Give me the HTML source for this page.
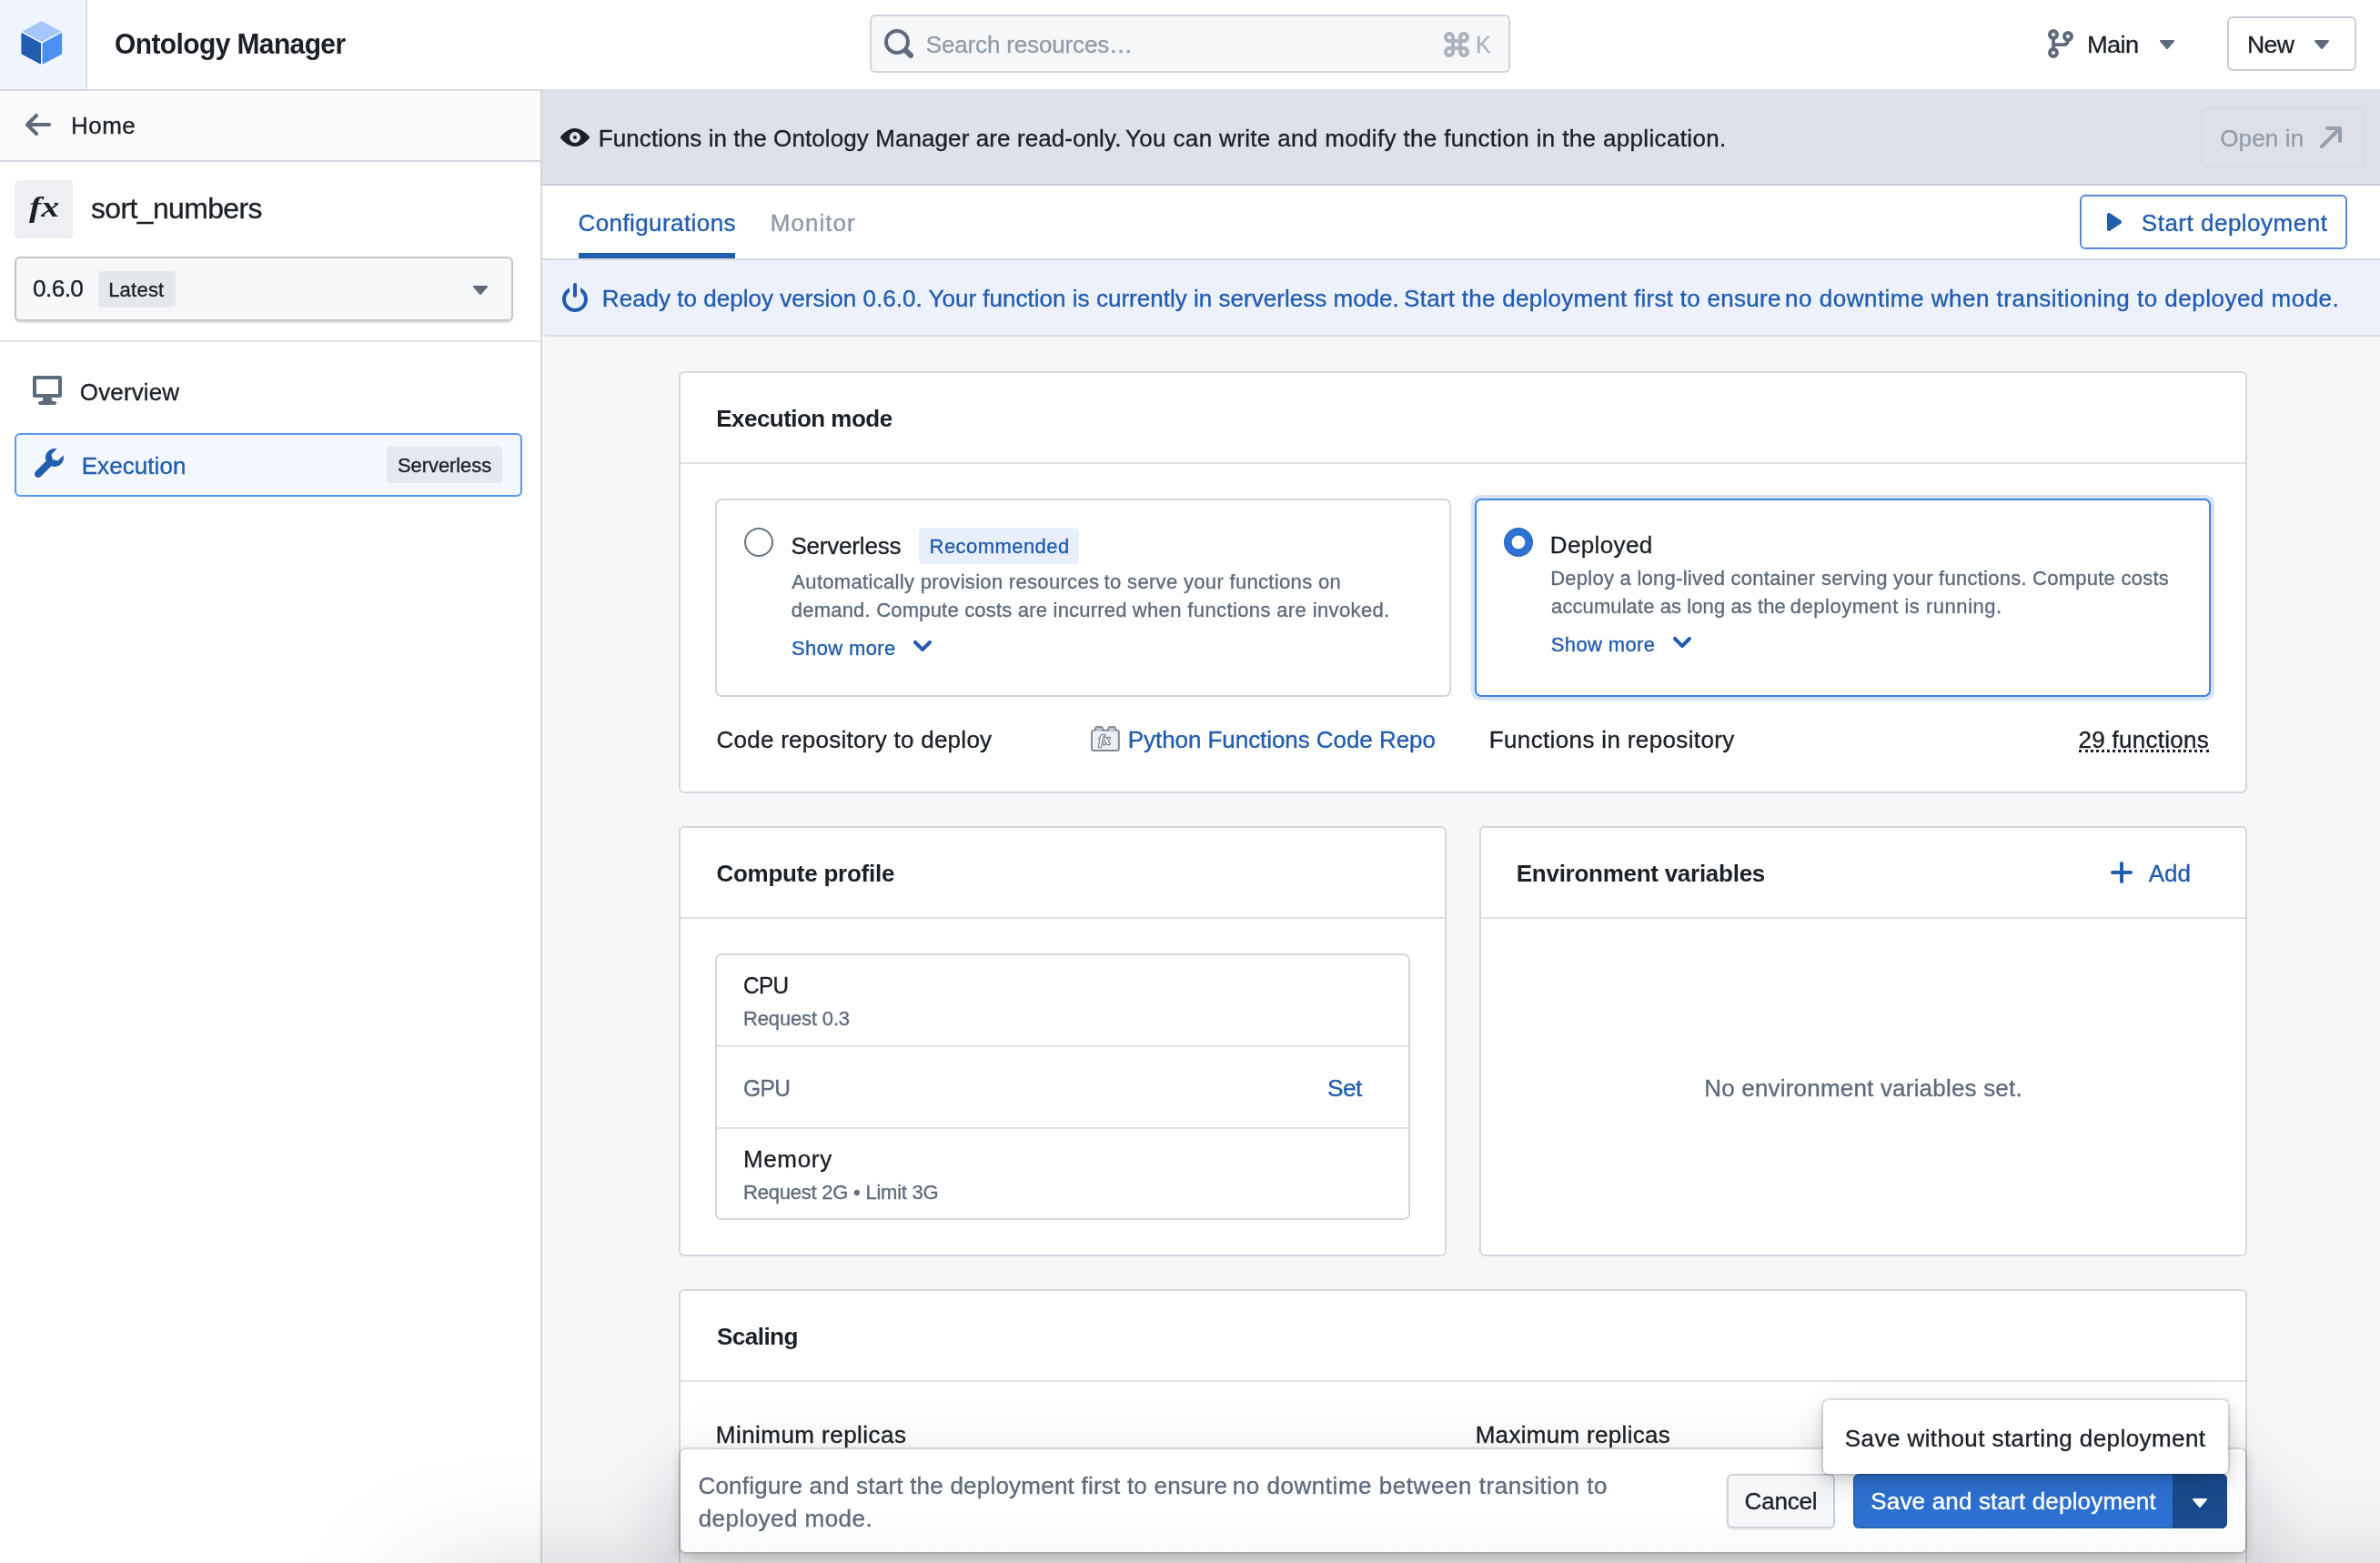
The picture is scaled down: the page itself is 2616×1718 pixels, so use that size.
<!DOCTYPE html>
<html lang="en"><head><meta charset="utf-8"><title>Ontology Manager</title>
<style>
html,body{margin:0;padding:0;background:#fff;}
body{width:2616px;height:1718px;overflow:hidden;font-family:"Liberation Sans",sans-serif;}
#root{will-change:transform;position:relative;width:2616px;height:1718px;overflow:hidden;background:#fff;}
#root *{box-sizing:border-box;}
.a{position:absolute;}
.t{position:absolute;white-space:nowrap;line-height:1;font-family:"Liberation Sans",sans-serif;-webkit-text-stroke:0.35px currentColor;}
svg{position:absolute;display:block;overflow:visible;}
.card{position:absolute;background:#fff;border:2px solid #d3d8de;border-radius:6px;}
.hr{position:absolute;height:2px;background:#dfe2e6;}

</style></head>
<body>
<div id="root">
<!-- ===== header ===== -->
<div class="a" style="left:0;top:0;width:2616px;height:100px;background:#fff;border-bottom:2px solid #d5d9e1;"></div>
<div class="a" style="left:0;top:0;width:96px;height:98px;background:#f0f4fe;border-right:2px solid #c8dafa;"></div>
<!-- cube logo -->
<svg style="left:23px;top:23px" width="46" height="48" viewBox="0 0 46 48">
  <polygon points="22.7,0.9 42.9,11.5 22.7,22.1 2.7,11.5" fill="#a4c6fb" stroke="#a4c6fb" stroke-width="1.2" stroke-linejoin="round"/>
  <polygon points="1,13.9 21.4,24.9 21.4,46.8 1,35.9" fill="#215db0" stroke="#215db0" stroke-width="1.2" stroke-linejoin="round"/>
  <polygon points="44.6,13.9 24.2,24.9 24.2,46.8 44.6,35.9" fill="#4c8ff0" stroke="#4c8ff0" stroke-width="1.2" stroke-linejoin="round"/>
</svg>
<!-- search box -->
<div class="a" style="left:956px;top:16px;width:704px;height:64px;background:#f6f7f9;border:2px solid #d0d5dc;border-radius:6px;"></div>
<svg style="left:972px;top:32px" width="32" height="32" viewBox="0 0 16 16"><path fill="#5f6b7c" d="M15.55 13.43l-2.67-2.68a6.94 6.94 0 001.11-3.76c0-3.87-3.13-7-7-7s-7 3.13-7 7 3.13 7 7 7c1.39 0 2.68-.42 3.76-1.11l2.68 2.67a1.498 1.498 0 102.12-2.12zm-8.56-1.44c-2.76 0-5-2.24-5-5s2.24-5 5-5 5 2.24 5 5-2.24 5-5 5z"/></svg>
<svg style="left:1585px;top:33px" width="32" height="32" viewBox="0 0 16 16"><path fill="#abb3bf" d="M12 9h-1V7h1c1.660 0 3-1.340 3-3s-1.340-3-3-3-3 1.340-3 3v1H7V4c0-1.660-1.340-3-3-3S1 2.340 1 4s1.340 3 3 3h1v2H4c-1.660 0-3 1.340-3 3s1.340 3 3 3 3-1.340 3-3v-1h2v1c0 1.660 1.340 3 3 3s3-1.340 3-3-1.340-3-3-3zm-1-5c0-.55.45-1 1-1s1 .45 1 1-.45 1-1 1h-1V4zM5 12c0 .55-.45 1-1 1s-1-.45-1-1 .45-1 1-1h1v1zm0-7H4c-.55 0-1-.45-1-1s.45-1 1-1 1 .45 1 1v1zm4 4H7V7h2v2zm3 4c-.55 0-1-.45-1-1v-1h1c.55 0 1 .45 1 1s-.45 1-1 1z"/></svg>
<!-- branch -->
<svg style="left:2249px;top:32px" width="32" height="32" viewBox="0 0 16 16" fill="none" stroke="#5f6b7c" stroke-width="2">
  <circle cx="4" cy="3" r="2"/><circle cx="12" cy="4" r="2"/><circle cx="4" cy="13" r="2"/>
  <path d="M4 5V11" stroke-width="1.9"/><path d="M4 8.6H9.4C11.4 8.6 12 7.6 12 6" stroke-width="1.9"/>
</svg>
<svg style="left:2366px;top:32px" width="32" height="32" viewBox="0 0 16 16"><path fill="#5f6b7c" d="M12 6.500c0-.28-.22-.5-.5-.5h-7a.495.495 0 00-.37.830l3.500 4c.09.1.22.170.370.170s.28-.07.370-.170l3.500-4c.08-.09.13-.2.13-.33z"/></svg>
<div class="a" style="left:2448px;top:18px;width:142px;height:60px;background:#fff;border:2px solid #c9ced6;border-radius:6px;"></div>
<svg style="left:2536px;top:32px" width="32" height="32" viewBox="0 0 16 16"><path fill="#5f6b7c" d="M12 6.500c0-.28-.22-.5-.5-.5h-7a.495.495 0 00-.37.830l3.500 4c.09.1.22.170.370.170s.28-.07.370-.170l3.500-4c.08-.09.13-.2.13-.33z"/></svg>

<!-- ===== sidebar ===== -->
<div class="a" style="left:0;top:100px;width:596px;height:1618px;background:#fff;border-right:2px solid #d3d8de;"></div>
<div class="a" style="left:0;top:100px;width:594px;height:78px;background:#fafafa;border-bottom:2px solid #d3d8e0;"></div>
<svg style="left:26px;top:121px" width="32" height="32" viewBox="0 0 16 16"><path fill="#5f6b7c" d="M13.990 6.990H4.410L7.700 3.700a1.003 1.003 0 00-1.420-1.420l-5 5a1.014 1.014 0 000 1.420l5 5a1.003 1.003 0 001.420-1.420L4.410 8.990H14c.55 0 1-.45 1-1s-.46-1-1.010-1z"/></svg>
<div class="a" style="left:16px;top:198px;width:64px;height:64px;background:#edeff2;border-radius:5px;"></div>
<div class="a" style="left:16px;top:282px;width:548px;height:71px;background:#f6f7f9;border:2px solid #c3c6cb;border-radius:6px;box-shadow:0 2px 2px rgba(17,20,24,0.14);"></div>
<div class="a" style="left:108px;top:298px;width:85px;height:40px;background:#e5e8eb;border-radius:4px;"></div>
<svg style="left:512px;top:302px" width="32" height="32" viewBox="0 0 16 16"><path fill="#5f6b7c" d="M12 6.500c0-.28-.22-.5-.5-.5h-7a.495.495 0 00-.37.830l3.500 4c.09.1.22.170.370.170s.28-.07.370-.170l3.500-4c.08-.09.13-.2.13-.33z"/></svg>
<div class="a" style="left:0;top:374px;width:594px;height:2px;background:#e1e4e8;"></div>
<svg style="left:36px;top:413px" width="32" height="32" viewBox="0 0 16 16"><path fill="#5f6b7c" d="M15 0H1C.45 0 0 .45 0 1v10c0 .55.45 1 1 1h4.750l-.5 2H4c-.55 0-1 .45-1 1s.45 1 1 1h8c.55 0 1-.45 1-1s-.45-1-1-1h-1.250l-.5-2H15c.55 0 1-.45 1-1V1c0-.55-.45-1-1-1zm-1 10H2V2h12v8z"/></svg>
<div class="a" style="left:16px;top:476px;width:558px;height:70px;background:#f3f7fe;border:2px solid #5a98f1;border-radius:6px;"></div>
<svg style="left:38px;top:493px" width="32" height="32" viewBox="0 0 16 16"><path fill="#215db0" d="M15.830 3.700l-3.060 3.050-2.840-.7-.7-2.830L12.290.170a5.004 5.004 0 00-4.830 1.290 4.967 4.967 0 00-1.120 5.360L.580 12.580c-.36.360-.580.860-.580 1.410 0 1.100.9 2 2 2 .55 0 1.050-.22 1.410-.59l5.770-5.770c1.790.69 3.910.33 5.350-1.120 1.320-1.300 1.740-3.150 1.300-4.810z"/></svg>
<div class="a" style="left:425px;top:491px;width:127px;height:40px;background:#e4e9f1;border-radius:4px;"></div>

<!-- ===== main area ===== -->
<div class="a" style="left:596px;top:100px;width:2020px;height:1618px;background:#f6f7f9;"></div>
<!-- read-only banner -->
<div class="a" style="left:596px;top:98px;width:2020px;height:106px;background:#dee1e9;border-bottom:2px solid #c5cad3;"></div>
<svg style="left:616px;top:135px" width="32" height="32" viewBox="0 0 16 16"><path fill="#1c2127" d="M8.002 7.003a1.003 1.003 0 000 2.005 1.003 1.003 0 000-2.005zm7.988.972v-.02-.01-.02-.02a.675.675 0 00-.17-.36c-.509-.673-1.118-1.264-1.737-1.806-1.328-1.173-2.846-2.155-4.523-2.546a6.702 6.702 0 00-2.925-.06c-.889.18-1.738.541-2.546.992C2.840 4.837 1.692 5.810.694 6.902c-.18.211-.36.411-.53.632-.219.29-.219.641 0 .932.51.672 1.119 1.264 1.738 1.805 1.328 1.173 2.846 2.156 4.523 2.547.968.23 1.947.24 2.925.06.889-.18 1.738-.542 2.546-.993 1.248-.712 2.397-1.684 3.395-2.777.18-.211.36-.411.53-.632.1-.13.15-.23.17-.36v-.02-.02-.01-.02-.07zm-7.988 3.038c-1.657 0-2.995-1.343-2.995-3.008 0-1.664 1.338-3.007 2.995-3.007s2.996 1.343 2.996 3.007c0 1.665-1.339 3.008-2.996 3.008z"/></svg>
<div class="a" style="left:2419px;top:118px;width:181px;height:66px;background:#dde0e8;border:2px solid #d6d9e1;border-radius:6px;"></div>
<svg style="left:2546px;top:135px" width="32" height="32" viewBox="0 0 16 16"><path fill="#959daa" d="M13 2H6c-.55 0-1 .45-1 1s.45 1 1 1h4.590L2.300 12.290c-.19.18-.3.43-.3.710a1.003 1.003 0 001.710.710L12 5.410V10c0 .55.45 1 1 1s1-.45 1-1V3c0-.55-.45-1-1-1z"/></svg>
<!-- tabs row -->
<div class="a" style="left:596px;top:204px;width:2020px;height:82px;background:#fff;border-bottom:2px solid #d5d8dd;"></div>
<div class="a" style="left:636px;top:278px;width:172px;height:6px;background:#215db0;"></div>
<div class="a" style="left:2286px;top:214px;width:294px;height:60px;background:#fff;border:2px solid #5b88d6;border-radius:6px;"></div>
<svg style="left:2308px;top:228px" width="32" height="32" viewBox="0 0 16 16"><path fill="#215db0" d="M12 8c0-.35-.19-.64-.46-.82l.01-.02-6-4-.01.02A.969.969 0 005 3c-.55 0-1 .45-1 1v8c0 .55.45 1 1 1 .21 0 .39-.08.54-.18l.01.02 6-4-.01-.02c.27-.18.46-.47.46-.82z"/></svg>
<!-- info banner -->
<div class="a" style="left:596px;top:286px;width:2030px;height:84px;background:#edf1fc;border-bottom:2px solid #d9dde6;border-radius:6px 0 0 6px;"></div>
<svg style="left:616px;top:311px" width="32" height="32" viewBox="0 0 16 16"><path fill="#215db0" d="M8 8c.55 0 1-.45 1-1V1c0-.55-.45-1-1-1S7 .45 7 1v6c0 .55.45 1 1 1zm3-5.320v2.340c1.210.910 2 2.350 2 3.980 0 2.760-2.240 5-5 5s-5-2.240-5-5c0-1.630.79-3.060 2-3.980V2.680C2.640 3.810 1 6.210 1 9c0 3.870 3.130 7 7 7s7-3.130 7-7c0-2.790-1.640-5.190-4-6.320z"/></svg>

<!-- ===== Execution mode card ===== -->
<div class="card" style="left:746px;top:408px;width:1724px;height:464px;"></div>
<div class="hr" style="left:748px;top:508px;width:1720px;"></div>
<div class="a" style="left:786px;top:548px;width:809px;height:218px;background:#fff;border:2px solid #d3d6db;border-radius:7px;"></div>
<div class="a" style="left:818px;top:580px;width:32px;height:32px;border-radius:50%;background:#fff;border:2px solid #66727f;"></div>
<div class="a" style="left:1010px;top:580px;width:176px;height:40px;background:#e9eefb;border-radius:5px;"></div>
<svg style="left:998px;top:694px" width="32" height="32" viewBox="0 0 16 16"><path fill="#215db0" d="M12 5c-.28 0-.53.110-.71.290L8 8.590l-3.290-3.300a1.003 1.003 0 00-1.420 1.420l4 4c.18.18.43.290.71.290s.53-.11.71-.29l4-4A1.003 1.003 0 0012 5z"/></svg>
<div class="a" style="left:1617px;top:544px;width:817px;height:226px;border-radius:10px;background:#d6e3fa;"></div>
<div class="a" style="left:1621px;top:548px;width:809px;height:218px;background:#fff;border:2px solid #3f84e5;border-radius:7px;"></div>
<div class="a" style="left:1653px;top:580px;width:32px;height:32px;border-radius:50%;background:radial-gradient(circle closest-side,#fff 0,#fff 6.8px,#2d72d2 7.8px,#2d72d2 14.4px,#2862b8 15.4px,#2862b8 100%);"></div>
<svg style="left:1833px;top:690px" width="32" height="32" viewBox="0 0 16 16"><path fill="#215db0" d="M12 5c-.28 0-.53.110-.71.290L8 8.590l-3.290-3.300a1.003 1.003 0 00-1.420 1.420l4 4c.18.18.43.290.71.290s.53-.11.71-.29l4-4A1.003 1.003 0 0012 5z"/></svg>
<!-- repo icon -->
<svg style="left:1199px;top:797px" width="32" height="30" viewBox="0 0 32 30">
  <path d="M3 5.8H5V4a2 2 0 0 1 2-2h3.9a2 2 0 0 1 2 2V5.8H19.100V4a2 2 0 0 1 2-2h3.900a2 2 0 0 1 2 2V5.8h1.800a2 2 0 0 1 2 2V26a2 2 0 0 1-2 2H3a2 2 0 0 1-2-2V7.800a2 2 0 0 1 2-2z" fill="#edf1f5" stroke="#898c90" stroke-width="2" stroke-linejoin="round"/>
  <rect x="6" y="3" width="5.900" height="3.800" fill="#b4c6d6"/><rect x="20.100" y="3" width="5.900" height="3.800" fill="#b4c6d6"/>
  <text x="9" y="21.300" font-family="Liberation Serif" font-style="italic" font-weight="700" font-size="15" fill="#fff" stroke="#808489" stroke-width="2.400" stroke-linejoin="round" paint-order="stroke" letter-spacing="-0.300">fx</text>
</svg>
<div class="a" style="left:2285px;top:824px;width:143px;height:0;border-bottom:3px dotted #1c2127;"></div>

<!-- ===== Compute profile card ===== -->
<div class="card" style="left:746px;top:908px;width:844px;height:473px;"></div>
<div class="hr" style="left:748px;top:1008px;width:840px;"></div>
<div class="a" style="left:786px;top:1048px;width:764px;height:293px;background:#fff;border:2px solid #d3d6db;border-radius:7px;"></div>
<div class="hr" style="left:788px;top:1149px;width:760px;"></div>
<div class="hr" style="left:788px;top:1239px;width:760px;"></div>

<!-- ===== Environment variables card ===== -->
<div class="card" style="left:1626px;top:908px;width:844px;height:473px;"></div>
<div class="hr" style="left:1628px;top:1008px;width:840px;"></div>
<svg style="left:2316px;top:943px" width="32" height="32" viewBox="0 0 16 16"><path fill="#215db0" d="M13 7H9V3c0-.55-.45-1-1-1s-1 .45-1 1v4H3c-.55 0-1 .45-1 1s.45 1 1 1h4v4c0 .55.45 1 1 1s1-.45 1-1V9h4c.55 0 1-.45 1-1s-.45-1-1-1z"/></svg>

<!-- ===== Scaling card ===== -->
<div class="card" style="left:746px;top:1417px;width:1724px;height:400px;"></div>
<div class="hr" style="left:748px;top:1517px;width:1720px;"></div>

<span class="t" style="left:125.76px;top:33.00px;font-size:30.5px;font-weight:700;-webkit-text-stroke:0;color:#1c2127;letter-spacing:-0.600px;transform:scaleX(0.9820);transform-origin:0 0;">Ontology Manager</span>
<span class="t" style="left:1017.85px;top:36.00px;font-size:26px;color:#929cab;letter-spacing:-0.162px;">Search resources…</span>
<span class="t" style="left:1621.92px;top:36.00px;font-size:26px;color:#abb3bf;letter-spacing:0.000px;transform:scaleX(0.9576);transform-origin:0 0;">K</span>
<span class="t" style="left:2294.17px;top:36.00px;font-size:26px;color:#1c2127;letter-spacing:-0.600px;transform:scaleX(1.0485);transform-origin:0 0;">Main</span>
<span class="t" style="left:2469.62px;top:36.00px;font-size:26px;color:#1c2127;letter-spacing:-0.600px;transform:scaleX(1.0225);transform-origin:0 0;">New</span>
<span class="t" style="left:77.88px;top:125.00px;font-size:26px;color:#1c2127;letter-spacing:0.509px;">Home</span>
<span class="t" style="left:32.23px;top:211.00px;font-size:32px;font-weight:700;-webkit-text-stroke:0;color:#1c2127;letter-spacing:0.000px;font-family:'Liberation Serif',serif;font-style:italic;transform:scaleX(1.2480);transform-origin:0 0;">fx</span>
<span class="t" style="left:99.97px;top:213.00px;font-size:32px;color:#1c2127;letter-spacing:-0.600px;transform:scaleX(0.9968);transform-origin:0 0;">sort_numbers</span>
<span class="t" style="left:35.86px;top:304.00px;font-size:26px;color:#1c2127;letter-spacing:-0.600px;transform:scaleX(1.0095);transform-origin:0 0;">0.6.0</span>
<span class="t" style="left:119.13px;top:308.00px;font-size:22px;color:#1c2127;letter-spacing:0.235px;">Latest</span>
<span class="t" style="left:87.80px;top:418.00px;font-size:26px;color:#1c2127;letter-spacing:0.133px;">Overview</span>
<span class="t" style="left:89.64px;top:499.00px;font-size:26px;color:#215db0;letter-spacing:0.084px;">Execution</span>
<span class="t" style="left:436.99px;top:501.00px;font-size:22px;color:#1c2127;letter-spacing:-0.081px;">Serverless</span>
<span class="t" style="left:657.81px;top:139.00px;font-size:26px;color:#1c2127;letter-spacing:0.089px;">Functions in the Ontology Manager are read-only.</span>
<span class="t" style="left:1236.99px;top:139.00px;font-size:26px;color:#1c2127;letter-spacing:0.348px;">You can write and modify the function in the application.</span>
<span class="t" style="left:2440.25px;top:139.00px;font-size:26px;color:#959daa;letter-spacing:0.151px;">Open in</span>
<span class="t" style="left:635.44px;top:232.00px;font-size:26px;color:#215db0;letter-spacing:0.420px;">Configurations</span>
<span class="t" style="left:846.81px;top:232.00px;font-size:26px;color:#8f99a8;letter-spacing:1.042px;">Monitor</span>
<span class="t" style="left:2353.85px;top:232.00px;font-size:26px;color:#215db0;letter-spacing:0.498px;">Start deployment</span>
<span class="t" style="left:661.86px;top:315.00px;font-size:26px;color:#215db0;letter-spacing:0.021px;">Ready to deploy version 0.6.0. Your function is currently in serverless mode.</span>
<span class="t" style="left:1543.09px;top:315.00px;font-size:26px;color:#215db0;letter-spacing:0.275px;">Start the deployment first to ensure</span>
<span class="t" style="left:1962.11px;top:315.00px;font-size:26px;color:#215db0;letter-spacing:0.496px;">no downtime when transitioning to deployed mode.</span>
<span class="t" style="left:787.26px;top:447.00px;font-size:26px;font-weight:700;-webkit-text-stroke:0;color:#1c2127;letter-spacing:-0.536px;">Execution mode</span>
<span class="t" style="left:869.43px;top:587.00px;font-size:26px;color:#1c2127;letter-spacing:-0.195px;">Serverless</span>
<span class="t" style="left:1021.62px;top:590.00px;font-size:22px;color:#215db0;letter-spacing:0.432px;">Recommended</span>
<span class="t" style="left:870.36px;top:629.00px;font-size:22px;color:#5f6b7c;letter-spacing:0.309px;">Automatically provision resources</span>
<span class="t" style="left:1213.61px;top:629.00px;font-size:22px;color:#5f6b7c;letter-spacing:0.328px;">to serve your functions on</span>
<span class="t" style="left:869.79px;top:660.00px;font-size:22px;color:#5f6b7c;letter-spacing:0.204px;">demand. Compute costs are incurred</span>
<span class="t" style="left:1244.75px;top:660.00px;font-size:22px;color:#5f6b7c;letter-spacing:0.375px;">when functions are invoked.</span>
<span class="t" style="left:870.04px;top:702.00px;font-size:22px;color:#215db0;letter-spacing:0.369px;">Show more</span>
<span class="t" style="left:1703.81px;top:586.00px;font-size:26px;color:#1c2127;letter-spacing:0.369px;">Deployed</span>
<span class="t" style="left:1704.13px;top:625.00px;font-size:22px;color:#5f6b7c;letter-spacing:0.261px;">Deploy a long-lived container</span>
<span class="t" style="left:2001.99px;top:625.00px;font-size:22px;color:#5f6b7c;letter-spacing:0.246px;">serving your functions. Compute costs</span>
<span class="t" style="left:1705.09px;top:656.00px;font-size:22px;color:#5f6b7c;letter-spacing:0.087px;">accumulate as long as the</span>
<span class="t" style="left:1967.77px;top:656.00px;font-size:22px;color:#5f6b7c;letter-spacing:0.527px;">deployment is running.</span>
<span class="t" style="left:1704.76px;top:698.00px;font-size:22px;color:#215db0;letter-spacing:0.373px;">Show more</span>
<span class="t" style="left:787.44px;top:800.00px;font-size:26px;color:#1c2127;letter-spacing:0.266px;">Code repository to deploy</span>
<span class="t" style="left:1239.81px;top:800.00px;font-size:26px;color:#215db0;letter-spacing:-0.062px;">Python Functions Code Repo</span>
<span class="t" style="left:1636.81px;top:800.00px;font-size:26px;color:#1c2127;letter-spacing:0.358px;">Functions in repository</span>
<span class="t" style="left:2284.52px;top:800.00px;font-size:26px;color:#1c2127;letter-spacing:0.270px;">29 functions</span>
<span class="t" style="left:787.38px;top:947.00px;font-size:26px;font-weight:700;-webkit-text-stroke:0;color:#1c2127;letter-spacing:-0.231px;">Compute profile</span>
<span class="t" style="left:817.39px;top:1070.00px;font-size:26px;color:#1c2127;letter-spacing:-0.600px;transform:scaleX(0.9343);transform-origin:0 0;">CPU</span>
<span class="t" style="left:817.07px;top:1109.00px;font-size:22px;color:#5f6b7c;letter-spacing:-0.160px;">Request 0.3</span>
<span class="t" style="left:817.40px;top:1183.00px;font-size:26px;color:#5f6b7c;letter-spacing:-0.600px;transform:scaleX(0.9447);transform-origin:0 0;">GPU</span>
<span class="t" style="left:1458.87px;top:1183.00px;font-size:26px;color:#215db0;letter-spacing:-0.600px;transform:scaleX(1.0146);transform-origin:0 0;">Set</span>
<span class="t" style="left:816.88px;top:1261.00px;font-size:26px;color:#1c2127;letter-spacing:0.679px;">Memory</span>
<span class="t" style="left:817.07px;top:1300.00px;font-size:22px;color:#5f6b7c;letter-spacing:-0.230px;">Request 2G • Limit 3G</span>
<span class="t" style="left:1666.77px;top:947.00px;font-size:26px;font-weight:700;-webkit-text-stroke:0;color:#1c2127;letter-spacing:-0.268px;">Environment variables</span>
<span class="t" style="left:2361.76px;top:947.00px;font-size:26px;color:#215db0;letter-spacing:-0.015px;">Add</span>
<span class="t" style="left:1873.20px;top:1183.00px;font-size:26px;color:#5f6b7c;letter-spacing:0.198px;">No environment variables set.</span>
<span class="t" style="left:787.60px;top:1456.00px;font-size:26px;font-weight:700;-webkit-text-stroke:0;color:#1c2127;letter-spacing:-0.600px;transform:scaleX(1.0071);transform-origin:0 0;">Scaling</span>
<span class="t" style="left:786.81px;top:1564.00px;font-size:26px;color:#1c2127;letter-spacing:0.455px;">Minimum replicas</span>
<span class="t" style="left:1621.64px;top:1564.00px;font-size:26px;color:#1c2127;letter-spacing:0.317px;">Maximum replicas</span>
<!-- ===== floating bar ===== -->
<div class="a" style="left:470px;top:1752px;width:2400px;height:300px;background:rgba(17,20,24,0.26);filter:blur(70px);"></div>
<div class="a" style="left:748px;top:1593px;width:1720px;height:113px;background:linear-gradient(#fff 60%,#f9fafb);border-radius:6px;box-shadow:0 0 0 2px rgba(17,20,24,0.10), 0 4px 12px rgba(17,20,24,0.2), 0 30px 80px 8px rgba(17,20,24,0.15);"></div>
<div class="a" style="left:1898px;top:1620px;width:119px;height:60px;background:#f6f7f9;border:2px solid #cdd1d7;border-radius:6px;box-shadow:0 2px 2px rgba(17,20,24,0.08);"></div>
<div class="a" style="left:2037px;top:1620px;width:411px;height:60px;background:#2d72d2;border-radius:6px;box-shadow:0 0 0 2px rgba(17,20,24,0.12) inset;"></div>
<div class="a" style="left:2388px;top:1620px;width:60px;height:60px;background:#1a4b8e;border-radius:0 6px 6px 0;"></div>
<svg style="left:2402px;top:1635px" width="32" height="32" viewBox="0 0 16 16"><path fill="#fff" d="M12 6.500c0-.28-.22-.5-.5-.5h-7a.495.495 0 00-.37.830l3.500 4c.09.1.22.170.370.170s.28-.07.370-.170l3.500-4c.08-.09.13-.2.13-.33z"/></svg>
<!-- dropdown -->
<div class="a" style="left:2004px;top:1539px;width:445px;height:81px;background:#fff;border-radius:6px;box-shadow:0 0 0 2px rgba(17,20,24,0.10), 0 4px 12px rgba(17,20,24,0.15), 0 12px 36px rgba(17,20,24,0.15);"></div>

<span class="t" style="left:767.41px;top:1620.00px;font-size:26px;color:#5f6b7c;letter-spacing:0.220px;">Configure and start the deployment first to ensure</span>
<span class="t" style="left:1354.74px;top:1620.00px;font-size:26px;color:#5f6b7c;letter-spacing:0.539px;">no downtime between transition to</span>
<span class="t" style="left:767.68px;top:1656.00px;font-size:26px;color:#5f6b7c;letter-spacing:0.460px;">deployed mode.</span>
<span class="t" style="left:1917.56px;top:1637.00px;font-size:26px;color:#1c2127;letter-spacing:-0.170px;">Cancel</span>
<span class="t" style="left:2056.29px;top:1637.00px;font-size:26px;color:#ffffff;letter-spacing:0.172px;">Save and start deployment</span>
<span class="t" style="left:2027.85px;top:1568.00px;font-size:26px;color:#1c2127;letter-spacing:0.427px;">Save without starting deployment</span>
</div>
</body></html>
